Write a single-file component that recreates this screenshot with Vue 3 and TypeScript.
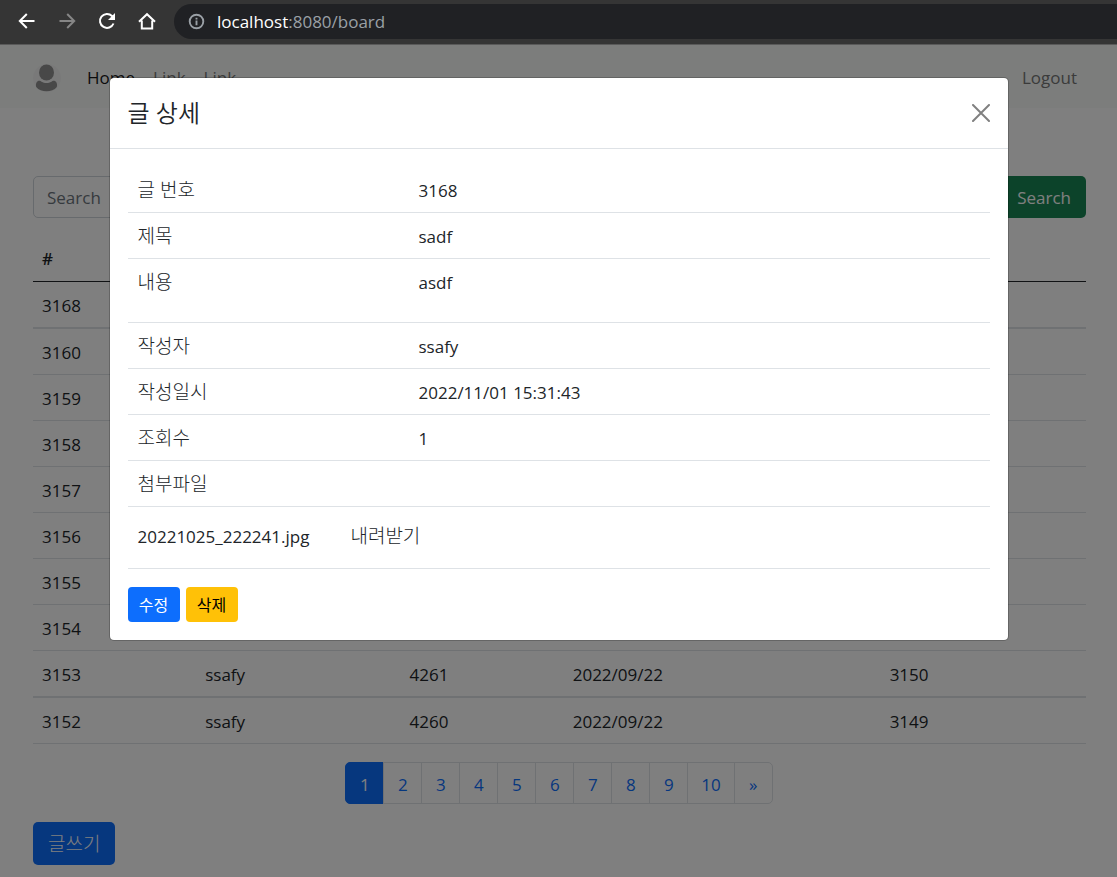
<script setup lang="ts">
import { ref } from 'vue'

interface Post {
  id: number
  author?: string
  code?: string
  date?: string
  count?: string
  thick?: boolean
}

interface DetailRow {
  label: string
  value: string
  tall?: boolean
}

const keyword = ref('')

const posts: Post[] = [
  { id: 3168, thick: true },
  { id: 3160 },
  { id: 3159 },
  { id: 3158 },
  { id: 3157 },
  { id: 3156 },
  { id: 3155 },
  { id: 3154 },
  { id: 3153, author: 'ssafy', code: '4261', date: '2022/09/22', count: '3150', thick: true },
  { id: 3152, author: 'ssafy', code: '4260', date: '2022/09/22', count: '3149' },
]

const details: DetailRow[] = [
  { label: '글 번호', value: '3168' },
  { label: '제목', value: 'sadf' },
  { label: '내용', value: 'asdf', tall: true },
  { label: '작성자', value: 'ssafy' },
  { label: '작성일시', value: '2022/11/01 15:31:43' },
  { label: '조회수', value: '1' },
  { label: '첨부파일', value: '' },
]

const pages = ['1', '2', '3', '4', '5', '6', '7', '8', '9', '10', '»']
</script>

<template>
  <div class="window">
    <header class="browser">
      <button class="tool" type="button" aria-label="Back">
        <svg viewBox="0 0 20 20"><path d="M17.500 10H3M9.800 3L2.800 10L9.800 17" /></svg>
      </button>
      <button class="tool dim" type="button" aria-label="Forward">
        <svg viewBox="0 0 20 20"><path d="M2.500 10H17M10.200 3L17.200 10L10.200 17" /></svg>
      </button>
      <button class="tool" type="button" aria-label="Reload">
        <svg viewBox="0 0 20 20">
          <path d="M16.500 12.500A7 7 0 1 1 15 5L16.500 6.500" />
          <path class="solid" d="M18 2V9H11Z" />
        </svg>
      </button>
      <button class="tool" type="button" aria-label="Home">
        <svg viewBox="0 0 20 20"><path d="M2 10.800L10 3.200L18 10.800M4.800 9.500V17.500H15.200V9.500" /></svg>
      </button>
      <div class="address">
        <svg class="info" viewBox="0 0 18 18">
          <circle cx="9" cy="9" r="7.200" />
          <path d="M9 8V13M9 5V6.800" />
        </svg>
        <span class="url"><b>localhost</b>:8080/board</span>
      </div>
    </header>

    <div class="page">
      <nav class="navbar">
        <a href="#" class="avatar" aria-label="Profile">
          <svg viewBox="0 0 28 28">
            <circle class="halo" cx="14" cy="14" r="14" />
            <ellipse cx="13.500" cy="8.500" rx="7.500" ry="8" />
            <path d="M5 17C7.500 15.500 8.500 19 13.500 19S19.500 15.500 22 17C24 18 24.500 21 23.800 23C21.500 26 17.500 27.300 13.500 27.300S5.500 26 3.200 23C2.500 21 3 18 5 17Z" />
          </svg>
        </a>
        <a href="#" class="active">Home</a>
        <a href="#">Link</a>
        <a href="#">Link</a>
        <a href="#" class="logout">Logout</a>
      </nav>

      <main class="content">
        <form class="search" @submit.prevent>
          <input v-model="keyword" type="text" placeholder="Search" aria-label="Search" />
          <button type="submit">Search</button>
        </form>

        <table class="posts">
          <colgroup>
            <col class="c-id" /><col class="c-author" /><col class="c-code" /><col class="c-date" /><col />
          </colgroup>
          <thead>
            <tr><th scope="col">#</th><th></th><th></th><th></th><th></th></tr>
          </thead>
          <tbody>
            <tr v-for="post in posts" :key="post.id" :class="{ thick: post.thick }">
              <td>{{ post.id }}</td>
              <td>{{ post.author }}</td>
              <td>{{ post.code }}</td>
              <td>{{ post.date }}</td>
              <td>{{ post.count }}</td>
            </tr>
          </tbody>
        </table>

        <ul class="pagination">
          <li v-for="(page, i) in pages" :key="page">
            <a href="#" :class="{ current: i === 0 }">{{ page }}</a>
          </li>
        </ul>

        <button class="write" type="button">글쓰기</button>
      </main>

      <div class="backdrop">
        <section class="modal" role="dialog" aria-labelledby="modal-title">
          <div class="modal-head">
            <h5 id="modal-title">글 상세</h5>
            <button type="button" class="close" aria-label="Close">
              <svg viewBox="0 0 18 18"><path d="M1 1L17 17M17 1L1 17" /></svg>
            </button>
          </div>
          <div class="modal-body">
            <table class="detail">
              <tbody>
                <tr v-for="row in details" :key="row.label" :class="{ tall: row.tall }">
                  <th scope="row">{{ row.label }}</th>
                  <td>{{ row.value }}</td>
                </tr>
                <tr class="files">
                  <td colspan="2">
                    <div class="file">
                      <span>20221025_222241.jpg</span>
                      <a href="#">내려받기</a>
                    </div>
                  </td>
                </tr>
              </tbody>
            </table>
            <div class="actions">
              <button type="button" class="edit">수정</button>
              <button type="button" class="remove">삭제</button>
            </div>
          </div>
        </section>
      </div>
    </div>
  </div>
</template>

<style>
body {
  margin: 0;
}
</style>

<style scoped>
* {
  box-sizing: border-box;
}

.window {
  display: flex;
  flex-direction: column;
  min-height: 100vh;
  font-family: "Open Sans", "Noto Sans CJK KR", sans-serif;
  font-size: 17px;
  font-weight: 400;
  line-height: 27px;
  color: #212529;
}

button,
input {
  font: inherit;
}

a {
  color: inherit;
  text-decoration: none;
}

.browser {
  display: flex;
  align-items: center;
  height: 44px;
  padding-left: 17px;
  background: #353535;
}

.tool {
  width: 20px;
  height: 20px;
  margin: 0 20px 2px 0;
  padding: 0;
  border: 0;
  background: none;
  color: #fff;
}

.tool svg {
  display: block;
  fill: none;
  stroke: currentColor;
  stroke-width: 2;
}

.tool .solid {
  fill: currentColor;
  stroke: none;
}

.tool.dim {
  color: #868686;
}

.address {
  display: flex;
  flex: 1;
  align-items: center;
  gap: 12px;
  height: 35px;
  margin: 0 0 1px -3px;
  padding-left: 14px;
  border-radius: 18px 0 0 18px;
  background: #202124;
}

.info {
  width: 17px;
  height: 17px;
  fill: none;
  stroke: #9aa0a6;
  stroke-width: 2;
}

.url {
  color: #9aa0a6;
}

.url b {
  font-weight: 400;
  color: #fff;
}

.page {
  position: relative;
  flex: 1;
  border-top: 1px solid #b4b4b4;
  background: #fff;
}

.navbar {
  display: flex;
  align-items: center;
  height: 63px;
  padding: 2px 40px 0 33px;
  background: #f8fbf9;
  color: #777;
}

.navbar a {
  margin-right: 18px;
}

.navbar .avatar {
  width: 28px;
  height: 28px;
  margin-right: 26px;
}

.avatar svg {
  display: block;
  fill: #909090;
}

.avatar .halo {
  fill: #f3f3f3;
}

.navbar .active {
  color: #191919;
}

.navbar .logout {
  margin: 0 0 0 auto;
}

.content {
  padding: 68px 31px 12px 33px;
}

.search {
  display: flex;
  gap: 9px;
  height: 42px;
}

.search input {
  flex: 1;
  min-width: 0;
  padding: 0 13px;
  border: 1px solid #ced4da;
  border-radius: 5px;
  background: #fff;
}

.search input::placeholder {
  color: #6c757d;
  opacity: 1;
}

.search button {
  padding: 0 15px;
  border: 0;
  border-radius: 5px;
  background: #198754;
  color: #fff;
}

table {
  width: 100%;
  border-collapse: separate;
  border-spacing: 0;
  table-layout: fixed;
}

th,
td {
  padding: 10px 9px 8px;
  border-bottom: 1px solid #dee2e6;
  text-align: left;
  vertical-align: top;
}

.posts {
  margin-top: 18px;
}

.posts tr {
  height: 46px;
}

.posts th {
  padding: 9px;
  border-color: #212529;
  font-weight: 600;
}

.posts .thick td {
  border-bottom-width: 2px;
}

.c-id,
.c-code {
  width: 15.500%;
}

.c-author {
  width: 19.400%;
}

.c-date {
  width: 30.100%;
}

.pagination {
  display: flex;
  justify-content: center;
  margin: 18px 0;
  padding: 0;
  list-style: none;
}

.pagination a {
  display: block;
  min-width: 39px;
  height: 42px;
  margin-left: -1px;
  padding: 8px 13px 7px;
  border: 1px solid #dee2e6;
  color: #0d6efd;
  text-align: center;
}

.pagination li:first-child a {
  border-radius: 5px 0 0 5px;
}

.pagination li:last-child a {
  border-radius: 0 5px 5px 0;
}

.pagination .current {
  border-color: #0d6efd;
  background: #0d6efd;
  color: #fff;
}

.write {
  display: block;
  height: 43px;
  padding: 2px 15px 0;
  border: 0;
  border-radius: 5px;
  background: #0d6efd;
  color: #fff;
  font-size: 19px;
  font-weight: 300;
}

.backdrop {
  position: absolute;
  inset: -1px 0 0;
  padding: 33px 18px;
  background: rgba(0, 0, 0, 0.5);
}

.modal {
  max-width: 900px;
  margin: 0 auto;
  border: 1px solid rgba(0, 0, 0, 0.2);
  border-radius: 5px;
  background: #fff;
  background-clip: padding-box;
}

.modal-head {
  display: flex;
  align-items: center;
  justify-content: space-between;
  height: 71px;
  padding: 0 18px;
  border-bottom: 1px solid #dee2e6;
}

.modal-head h5 {
  margin: 0;
  font-size: 24px;
  font-weight: 350;
  line-height: 34px;
}

.close {
  width: 18px;
  height: 18px;
  padding: 0;
  border: 0;
  background: none;
}

.close svg {
  display: block;
  fill: none;
  stroke: #808080;
  stroke-width: 2;
  stroke-linecap: round;
}

.modal-body {
  padding: 18px;
}

.detail th,
.detail td {
  padding-left: 10px;
}

.detail th {
  width: 281px;
  font-size: 19px;
  font-weight: 300;
}

.detail .tall td,
.detail .tall th {
  height: 64px;
}

.detail .files td {
  height: 62px;
}

.file {
  display: flex;
  align-items: center;
  gap: 41px;
  padding-top: 6px;
}

.file a {
  font-size: 19px;
  font-weight: 300;
}

.actions {
  display: flex;
  gap: 6px;
  margin-top: 18px;
}

.actions button {
  min-width: 52px;
  height: 35px;
  padding: 2px 10px 0;
  border: 0;
  border-radius: 4px;
  font-size: 16px;
}

.edit {
  background: #0d6efd;
  color: #fff;
}

.remove {
  background: #ffc107;
  color: #000;
}
</style>
